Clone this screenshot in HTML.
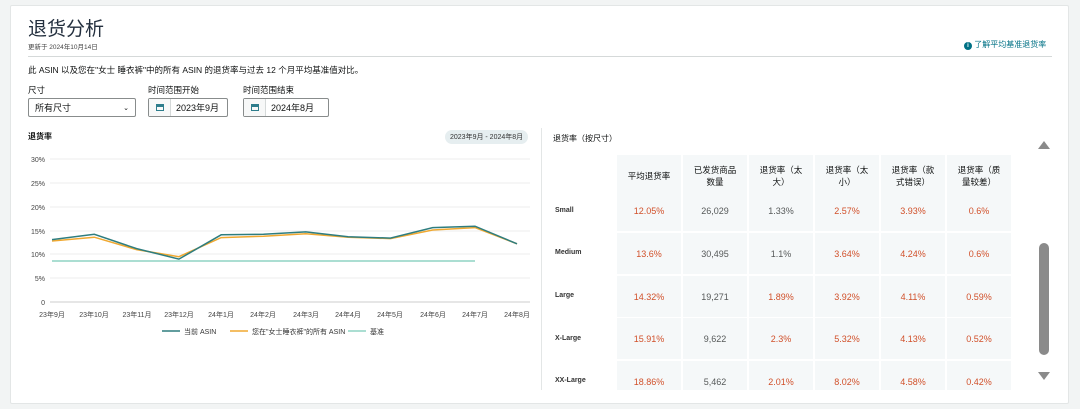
<!DOCTYPE html>
<html><head><meta charset="utf-8"><style>
body{margin:0;width:1080px;height:409px;background:#f2f4f4;font-family:"Liberation Sans","Noto Sans CJK SC",sans-serif;color:#0f1111;position:relative;overflow:hidden}
.card{position:absolute;left:10px;top:5px;width:1057px;height:397px;background:#fff;border:1px solid #e3e6e6;border-radius:2px}
.a{position:absolute;white-space:nowrap}
.sel{position:absolute;height:19px;border:1px solid #888c8c;border-radius:2px;font-size:9px;line-height:19px;box-sizing:border-box}
.cal{display:inline-block;width:21px;height:100%;border-right:1px solid #d5d9d9;background:#f7f8f8;vertical-align:top;text-align:center}
.cell{position:absolute;background:#f5f8f9;width:64px;height:41px;font-size:9px;display:flex;align-items:center;justify-content:center;text-align:center}
.h{padding:0 9px;box-sizing:border-box;font-size:8.5px;line-height:12px}
.r{color:#d1502a}.g{color:#565959}
.lab{position:absolute;left:555px;font-size:7px;font-weight:bold;color:#333}
</style></head><body>
<div class="card"></div>
<div class="a" style="left:28px;top:14px;font-size:19px;color:#232f3e">退货分析</div>
<div class="a" style="left:28px;top:41px;font-size:6.5px;color:#444">更新于 2024年10月14日</div>
<div class="a" style="left:964px;top:39px;font-size:8px;color:#007185"><span style="display:inline-block;width:8px;height:8px;border-radius:50%;background:#007185;color:#fff;font-size:6px;line-height:8px;text-align:center;font-weight:bold">i</span> 了解平均基准退货率</div>
<div class="a" style="left:28px;top:56px;width:1024px;height:1px;background:#d5d9d9"></div>
<div class="a" style="left:28px;top:64px;font-size:8.5px">此 ASIN 以及您在"女士 睡衣裤"中的所有 ASIN 的退货率与过去 12 个月平均基准值对比。</div>
<div class="a" style="left:28px;top:84px;font-size:8.5px">尺寸</div>
<div class="a" style="left:148px;top:84px;font-size:8.5px">时间范围开始</div>
<div class="a" style="left:243px;top:84px;font-size:8.5px">时间范围结束</div>
<div class="sel" style="left:28px;top:98px;width:108px;padding-left:6px">所有尺寸<span style="position:absolute;right:6px;font-size:7px">⌄</span></div>
<div class="sel" style="left:148px;top:98px;width:80px"><span class="cal"><span style="display:inline-block;width:8px;height:7px;border:1.5px solid #2e7d8c;border-top-width:3px;margin-top:4px;box-sizing:border-box"></span></span> &nbsp;2023年9月</div>
<div class="sel" style="left:243px;top:98px;width:86px"><span class="cal"><span style="display:inline-block;width:8px;height:7px;border:1.5px solid #2e7d8c;border-top-width:3px;margin-top:4px;box-sizing:border-box"></span></span> &nbsp;2024年8月</div>
<div class="a" style="left:28px;top:131px;font-size:8px;font-weight:bold">退货率</div>
<div class="a" style="left:445px;top:130px;font-size:7px;background:#e6eef0;border-radius:7px;padding:2px 5px;color:#333">2023年9月 - 2024年8月</div>
<div class="a" style="left:541px;top:128px;width:1px;height:262px;background:#e3e6e6"></div>
<svg class="a" style="left:0;top:0" width="540" height="409">
<g stroke="#eceeee" stroke-width="1">
<line x1="50" y1="159" x2="530" y2="159"/><line x1="50" y1="183" x2="530" y2="183"/><line x1="50" y1="207" x2="530" y2="207"/><line x1="50" y1="231" x2="530" y2="231"/><line x1="50" y1="254" x2="530" y2="254"/><line x1="50" y1="278" x2="530" y2="278"/></g>
<line x1="50" y1="302" x2="530" y2="302" stroke="#ccc"/>
<g font-size="7" fill="#444" text-anchor="end" font-family="Liberation Sans,Noto Sans CJK SC,sans-serif">
<text x="45" y="162">30%</text><text x="45" y="186">25%</text><text x="45" y="210">20%</text><text x="45" y="234">15%</text><text x="45" y="257">10%</text><text x="45" y="281">5%</text><text x="45" y="305">0</text></g>
<g font-size="7" fill="#444" text-anchor="middle" font-family="Liberation Sans,Noto Sans CJK SC,sans-serif">
<text x="52" y="317">23年9月</text><text x="94" y="317">23年10月</text><text x="137" y="317">23年11月</text><text x="179" y="317">23年12月</text><text x="221" y="317">24年1月</text><text x="263" y="317">24年2月</text><text x="306" y="317">24年3月</text><text x="348" y="317">24年4月</text><text x="390" y="317">24年5月</text><text x="433" y="317">24年6月</text><text x="475" y="317">24年7月</text><text x="517" y="317">24年8月</text></g>
<line x1="52" y1="261" x2="475" y2="261" stroke="#8fd3c4" stroke-width="1.5"/>
<polyline fill="none" stroke="#f0a830" stroke-width="1.5" points="52,241 94.3,237.2 136.6,249.6 178.9,256.7 221.2,237.6 263.5,236.2 305.8,233.8 348.1,237.2 390.4,238.6 432.7,230 475,227.6 517,243.8"/>
<polyline fill="none" stroke="#2e7d7f" stroke-width="1.5" points="52,239.6 94.3,234.3 136.6,248.6 178.9,259.1 221.2,234.8 263.5,234.3 305.8,231.9 348.1,236.7 390.4,238.1 432.7,227.6 475,226.2 517,243.8"/>
<g font-size="7" fill="#333" font-family="Liberation Sans,Noto Sans CJK SC,sans-serif">
<line x1="162" y1="331" x2="180" y2="331" stroke="#2e7d7f" stroke-width="1.5"/><text x="184" y="334">当前 ASIN</text>
<line x1="230" y1="331" x2="248" y2="331" stroke="#f0a830" stroke-width="1.5"/><text x="252" y="334">您在"女士睡衣裤"的所有 ASIN</text>
<line x1="348" y1="331" x2="366" y2="331" stroke="#8fd3c4" stroke-width="1.5"/><text x="370" y="334">基准</text></g>
</svg>
<div class="a" style="left:553px;top:133px;font-size:8px">退货率（按尺寸）</div>
<div class="cell h" style="left:617px;top:155px">平均退货率</div>
<div class="cell h" style="left:683px;top:155px">已发货商品数量</div>
<div class="cell h" style="left:749px;top:155px">退货率（太大）</div>
<div class="cell h" style="left:815px;top:155px">退货率（太小）</div>
<div class="cell h" style="left:881px;top:155px">退货率（款式错误）</div>
<div class="cell h" style="left:947px;top:155px">退货率（质量较差）</div>
<div class="lab" style="top:207px">Small</div>
<div class="cell r" style="left:617px;top:190px">12.05%</div><div class="cell g" style="left:683px;top:190px">26,029</div><div class="cell g" style="left:749px;top:190px">1.33%</div><div class="cell r" style="left:815px;top:190px">2.57%</div><div class="cell r" style="left:881px;top:190px">3.93%</div><div class="cell r" style="left:947px;top:190px">0.6%</div>
<div class="lab" style="top:249px">Medium</div>
<div class="cell r" style="left:617px;top:233px">13.6%</div><div class="cell g" style="left:683px;top:233px">30,495</div><div class="cell g" style="left:749px;top:233px">1.1%</div><div class="cell r" style="left:815px;top:233px">3.64%</div><div class="cell r" style="left:881px;top:233px">4.24%</div><div class="cell r" style="left:947px;top:233px">0.6%</div>
<div class="lab" style="top:292px">Large</div>
<div class="cell r" style="left:617px;top:276px">14.32%</div><div class="cell g" style="left:683px;top:276px">19,271</div><div class="cell r" style="left:749px;top:276px">1.89%</div><div class="cell r" style="left:815px;top:276px">3.92%</div><div class="cell r" style="left:881px;top:276px">4.11%</div><div class="cell r" style="left:947px;top:276px">0.59%</div>
<div class="lab" style="top:335px">X-Large</div>
<div class="cell r" style="left:617px;top:318px">15.91%</div><div class="cell g" style="left:683px;top:318px">9,622</div><div class="cell r" style="left:749px;top:318px">2.3%</div><div class="cell r" style="left:815px;top:318px">5.32%</div><div class="cell r" style="left:881px;top:318px">4.13%</div><div class="cell r" style="left:947px;top:318px">0.52%</div>
<div class="lab" style="top:377px">XX-Large</div>
<div class="cell r" style="left:617px;top:361px;height:29px;align-items:flex-end;padding-bottom:3px;box-sizing:border-box">18.86%</div><div class="cell g" style="left:683px;top:361px;height:29px;align-items:flex-end;padding-bottom:3px;box-sizing:border-box">5,462</div><div class="cell r" style="left:749px;top:361px;height:29px;align-items:flex-end;padding-bottom:3px;box-sizing:border-box">2.01%</div><div class="cell r" style="left:815px;top:361px;height:29px;align-items:flex-end;padding-bottom:3px;box-sizing:border-box">8.02%</div><div class="cell r" style="left:881px;top:361px;height:29px;align-items:flex-end;padding-bottom:3px;box-sizing:border-box">4.58%</div><div class="cell r" style="left:947px;top:361px;height:29px;align-items:flex-end;padding-bottom:3px;box-sizing:border-box">0.42%</div>
<svg class="a" style="left:1036px;top:138px" width="16" height="250">
<polygon points="2,11 14,11 8,3" fill="#8a8a8a"/>
<rect x="3" y="105" width="10" height="112" rx="5" fill="#8a8a8a"/>
<polygon points="2,234 14,234 8,242" fill="#8a8a8a"/>
</svg>
</body></html>
